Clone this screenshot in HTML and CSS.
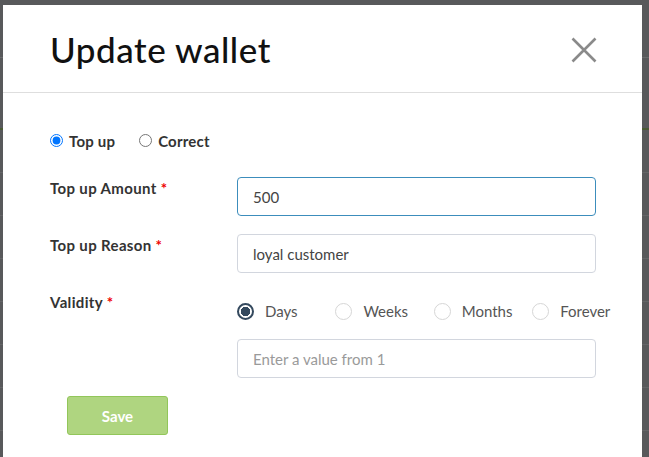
FILE: index.html
```html
<!DOCTYPE html>
<html lang="en">
<head>
<meta charset="utf-8">
<title>Update wallet</title>
<link rel="stylesheet" href="styles.css">
</head>
<body>
<div class="backdrop">
  <div class="bd-top"></div>
  <div class="bd-green"></div>
  <div class="bd-row"></div>
  <div class="bd-row"></div>
  <div class="bd-row"></div>
  <div class="bd-row"></div>
  <div class="bd-row"></div>
  <div class="bd-row"></div>
  <div class="bd-row"></div>
</div>
<div class="modal">
  <div class="modal-header">
    <h1 class="modal-title">Update wallet</h1>
    <button class="close" type="button" aria-label="Close">
      <svg width="26" height="26" viewBox="0 0 26 26"><path d="M1.5 1.5 L24.5 24.5 M24.5 1.5 L1.5 24.5" stroke="#8a8a8a" stroke-width="2.6" fill="none"/></svg>
    </button>
  </div>
  <div class="modal-body">
    <div class="mode">
      <label class="mode-opt"><input type="radio" name="mode" checked> Top up</label>
      <label class="mode-opt"><input type="radio" name="mode"> Correct</label>
    </div>
    <div class="row">
      <div class="label">Top up Amount <span class="req">*</span></div>
      <div class="field"><div class="input focused">500</div></div>
    </div>
    <div class="row row-gap">
      <div class="label">Top up Reason <span class="req">*</span></div>
      <div class="field"><div class="input">loyal customer</div></div>
    </div>
    <div class="row row-validity">
      <div class="label">Validity <span class="req">*</span></div>
      <div class="field">
        <div class="choices">
          <div class="choice"><span class="dot on"></span>Days</div>
          <div class="choice"><span class="dot"></span>Weeks</div>
          <div class="choice"><span class="dot"></span>Months</div>
          <div class="choice"><span class="dot"></span>Forever</div>
        </div>
        <div class="input placeholder">Enter a value from 1</div>
      </div>
    </div>
    <button class="save" type="button">Save</button>
  </div>
</div>
</body>
</html>
```
FILE: styles.css
```css
html, body {
  margin: 0;
  padding: 0;
}
body {
  width: 649px;
  height: 457px;
  overflow: hidden;
  background: #58595b;
  font-family: Lato, "Open Sans", "Noto Sans", sans-serif;
  position: relative;
}
.backdrop {
  display: flex;
  flex-direction: column;
}
.bd-top {
  height: 57px;
  border-bottom: 1px solid #6a6b6d;
}
.bd-green {
  height: 70px;
  border-bottom: 2px solid #4a5a35;
}
.bd-row {
  height: 42px;
  border-bottom: 1px solid #646567;
}
.modal {
  position: absolute;
  left: 3px;
  top: 5px;
  width: 639px;
  height: 470px;
  background: #fff;
}
.modal-header {
  height: 87px;
  border-bottom: 1px solid #dedede;
  display: flex;
  align-items: center;
  justify-content: space-between;
  padding: 0 45px 0 47px;
}
.modal-title {
  margin: 0;
  font-size: 35px;
  font-weight: 500;
  color: #111;
  letter-spacing: 0.55px;
}
.close {
  border: 0;
  background: none;
  padding: 0;
  width: 26px;
  height: 26px;
  margin-top: 2px;
}
.close svg { display: block; }
.modal-body {
  padding: 0 46px 0 47px;
}
.mode {
  margin-top: 38px;
  height: 20px;
  display: flex;
  align-items: center;
  gap: 24px;
}
.mode-opt {
  display: flex;
  align-items: center;
  font-size: 15px;
  font-weight: 700;
  color: #333;
  letter-spacing: 0.2px;
}
.mode-opt input {
  margin: 0 6px 2px 0;
  width: 13px;
  height: 13px;
}
.row {
  display: grid;
  grid-template-columns: 187px 359px;
  margin-top: 26px;
}
.row-gap { margin-top: 18px; }
.row-validity { margin-top: 18px; }
.label {
  font-size: 15px;
  font-weight: 700;
  color: #333;
  line-height: 20px;
  padding-top: 1px;
  letter-spacing: 0.35px;
}
.req { color: #e00; }
.input {
  box-sizing: border-box;
  height: 39px;
  border: 1px solid #d2d6de;
  border-radius: 4px;
  padding: 0 15px;
  display: flex;
  align-items: center;
  font-size: 15px;
  color: #444;
}
.input.focused {
  border-color: #3c8dbc;
}
.input.placeholder {
  color: #9a9a9a;
}
.choices {
  display: flex;
  padding-top: 10px;
  height: 20px;
  margin-bottom: 18px;
}
.choice {
  width: 98.4px;
  flex: none;
  display: flex;
  align-items: center;
  font-size: 15px;
  color: #555;
}
.dot {
  box-sizing: border-box;
  width: 17px;
  height: 17px;
  border-radius: 50%;
  border: 1px solid #d6d6d6;
  margin-right: 11px;
  background: #fff;
}
.dot.on {
  border: 2px solid #34495e;
  background: radial-gradient(circle, #34495e 0 4.5px, #fff 5px);
}
.save {
  margin: 18px 0 0 17px;
  width: 101px;
  height: 39px;
  border: 1px solid #92c65a;
  border-radius: 3px;
  background: #afd580;
  color: #fff;
  font-family: Lato, "Open Sans", sans-serif;
  font-size: 15px;
  font-weight: 700;
}
```
